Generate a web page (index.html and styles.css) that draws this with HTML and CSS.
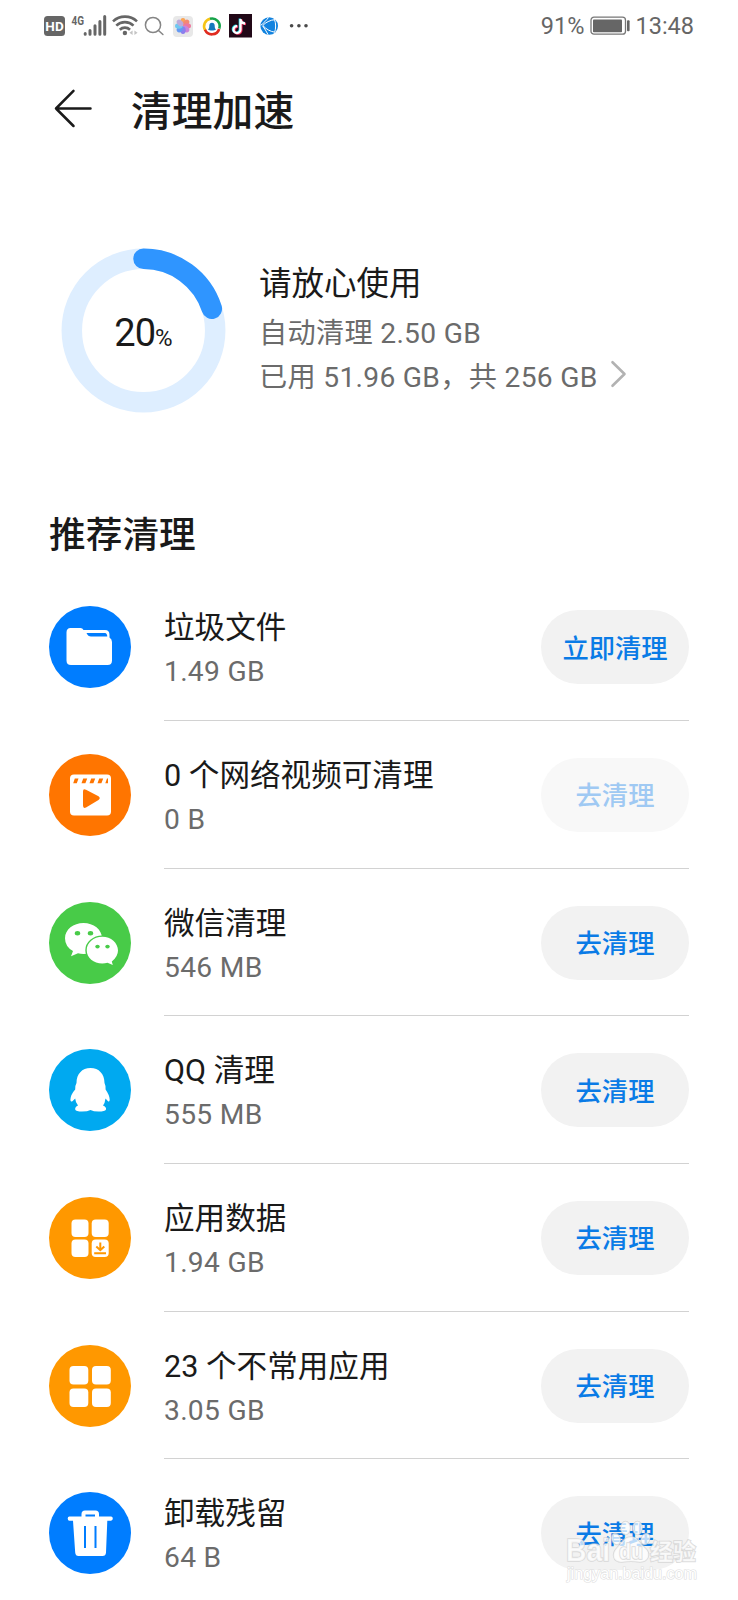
FILE: index.html
```html
<!DOCTYPE html>
<html lang="zh-CN">
<head>
<meta charset="utf-8">
<title>清理加速</title>
<link rel="stylesheet" href="styles.css">
</head>
<body>
<div class="screen">
  <div class="status">
    <svg class="status-icons" width="270" height="40" viewBox="40 6 270 40">
      <rect x="44" y="16" width="21" height="20" rx="3.5" fill="#666"/>
      <text x="54.5" y="30.600" class="hd" text-anchor="middle">HD</text>
      <text x="71.5" y="24.5" class="g4" textLength="12.5" lengthAdjust="spacingAndGlyphs">4G</text>
      <g stroke="#666" stroke-width="3" stroke-linecap="round">
        <path d="M85.2 33.4v.8M90 30.4v3.8M95 25.8v8.4M99.9 21.4v12.8M104.7 16.5v17.7"/>
      </g>
      <g fill="none" stroke="#666" stroke-width="2.6">
        <path d="M113 21.4a17.6 17.6 0 0 1 24 0M116.3 25.6a12.4 12.4 0 0 1 17.2 0M119.8 29.7a7.3 7.3 0 0 1 10.2 0"/>
      </g>
      <circle cx="124.9" cy="33" r="2.2" fill="#666"/>
      <path d="M132.6 30.5v4.6l-3.2-2.3zM134.4 30.5v4.6l3.2-2.3z" fill="#c4c4c4"/>
      <g fill="none" stroke="#858585" stroke-width="1.5" stroke-linecap="round">
        <circle cx="153" cy="25" r="7.6"/><path d="M158.5 30.5l4.4 4"/>
      </g>
      <rect x="173" y="16" width="20" height="21" rx="4" fill="#e8e8e8"/>
      <g opacity=".85">
        <ellipse cx="183" cy="21.8" rx="2.7" ry="3.8" fill="#ff9a3d"/>
        <ellipse cx="183" cy="21.8" rx="2.7" ry="3.8" fill="#f7785f" transform="rotate(45 183 26)"/>
        <ellipse cx="183" cy="21.8" rx="2.7" ry="3.8" fill="#ef6590" transform="rotate(90 183 26)"/>
        <ellipse cx="183" cy="21.8" rx="2.7" ry="3.8" fill="#c873d8" transform="rotate(135 183 26)"/>
        <ellipse cx="183" cy="21.8" rx="2.7" ry="3.8" fill="#7d6df0" transform="rotate(180 183 26)"/>
        <ellipse cx="183" cy="21.8" rx="2.7" ry="3.8" fill="#4f8cf5" transform="rotate(225 183 26)"/>
        <ellipse cx="183" cy="21.8" rx="2.7" ry="3.8" fill="#5cc3f2" transform="rotate(270 183 26)"/>
        <ellipse cx="183" cy="21.8" rx="2.7" ry="3.8" fill="#b7a0d8" transform="rotate(315 183 26)"/>
      </g>
      <g fill="none" stroke-width="2.6">
        <path d="M205.4 30.5A7.6 7.6 0 0 1 210.5 18.7" stroke="#f5c518"/>
        <path d="M210 18.8A7.6 7.6 0 0 1 219.3 28.5" stroke="#16a34a"/>
        <path d="M219.2 29A7.6 7.6 0 0 1 205 29.8" stroke="#e02b20"/>
      </g>
      <path d="M208 29.500c1.200-1.200 1.300-2.300 1.300-3.800 0-2 1-3 2.700-3s2.700 1 2.700 3c0 1.500.1 2.600 1.300 3.800-1 .8-2.300 1-4 1s-3-.2-4-1z" fill="#1478bd"/>
      <rect x="229" y="14" width="23" height="23.500" fill="#210817"/>
      <g fill="none" stroke-width="2.300">
        <path d="M240.500 19v10.500a3.500 3.500 0 1 1-3.300-3.400M240.500 19.500c.5 2.500 2 3.800 4.600 4" stroke="#20d5e5" transform="translate(-.7 -.5)"/>
        <path d="M240.500 19v10.500a3.500 3.500 0 1 1-3.300-3.400M240.500 19.500c.5 2.500 2 3.800 4.600 4" stroke="#f0295a" transform="translate(.9 .6)"/>
        <path d="M240.500 19v10.500a3.500 3.500 0 1 1-3.300-3.400M240.500 19.500c.5 2.500 2 3.800 4.600 4" stroke="#fff"/>
      </g>
      <circle cx="269.200" cy="26" r="8.800" fill="#1283df"/>
      <g fill="none" stroke="#fff" stroke-width="1">
        <path d="M275.500 19.500C270 20 265.500 22.500 262.800 25.500C266 29 270 31.500 274.800 32.200M274.500 19.500C276 23.500 276 28.500 274.600 32.500M268.500 17.500C266.500 20 263.500 23.500 260.700 25.300M262.600 25.800C264.500 28.500 266.500 31.500 268 34.500"/>
      </g>
      <g fill="#4a4a4a"><circle cx="291.600" cy="25.700" r="1.800"/><circle cx="298.900" cy="25.700" r="1.800"/><circle cx="306" cy="25.700" r="1.800"/></g>
    </svg>
    <div class="status-right">
      <span class="pct">91%</span>
      <svg class="battery" width="40" height="20" viewBox="0 0 40 20">
        <rect x="1" y="1.200" width="34.500" height="17" rx="3" fill="#fff" stroke="#777" stroke-width="1.300"/>
        <rect x="3" y="3.500" width="29" height="12.700" rx=".8" fill="#666"/>
        <rect x="37" y="4.300" width="2.600" height="11" rx="1" fill="#666"/>
      </svg>
      <span class="clock">13:48</span>
    </div>
  </div>

  <header class="header">
    <svg class="back" width="40" height="40" viewBox="0 0 40 40" fill="none" stroke="#1a1a1a" stroke-width="2.500" stroke-linecap="round" stroke-linejoin="round">
      <path d="M20.500 2.800L3 20.500L20.500 38M3 20.500H37.500"/>
    </svg>
    <h1 class="title">清理加速</h1>
  </header>

  <section class="summary">
    <div class="ring">
      <svg class="ring-svg" width="165" height="165" viewBox="-82.500 -82.500 165 165" fill="none" stroke-width="20.500">
        <circle r="71.700" stroke="#deeeff"/>
        <path d="M0 -71.700A71.700 71.700 0 0 1 68.300 -21.800" stroke="#2f95ff" stroke-linecap="round"/>
      </svg>
      <div class="ring-label">20<span class="ring-unit">%</span></div>
    </div>
    <div class="summary-text">
      <div class="summary-title">请放心使用</div>
      <div class="summary-line">自动清理 2.50 GB</div>
      <div class="summary-line">已用 51.96 GB，共 256 GB
        <svg class="chevron" width="18" height="28" viewBox="0 0 18 28" fill="none" stroke="#b2b2b2" stroke-width="2.600" stroke-linecap="round" stroke-linejoin="round"><path d="M2.500 2.200L14.500 14L2.500 25.800"/></svg>
      </div>
    </div>
  </section>

  <h2 class="section-title">推荐清理</h2>

  <div class="list">
    <div class="row">
      <svg class="icon" viewBox="0 0 82 82"><circle cx="41" cy="41" r="41" fill="#007dff"/>
        <path d="M21.500 22H31.500Q33.500 22 34.500 24H56Q60.500 24 60.500 29V31.500Q63 33 63 36V54.500Q63 59 58.500 59H22Q17.500 59 17.500 54.500V26.500Q17.500 22 21.500 22Z" fill="#fff"/>
        <path d="M37.500 27H56Q58 27 58.300 30.500H42Q39 30.500 37.500 27Z" fill="#007dff"/>
      </svg>
      <div class="body"><div class="text"><div class="name">垃圾文件</div><div class="size">1.49 GB</div></div><button class="btn">立即清理</button></div>
    </div>
    <div class="row">
      <svg class="icon" viewBox="0 0 82 82"><circle cx="41" cy="41" r="41" fill="#ff7500"/>
        <rect x="21" y="20.500" width="41" height="41" rx="4" fill="#fff"/>
        <g fill="#ff7500"><path d="M25.800 24.500H29.500L27.800 29.300H24.200ZM34.200 24.500H38.200L36.400 29.300H32.500ZM42.200 24.500H46.200L44.400 29.300H40.500ZM50.200 24.500H54.200L52.400 29.300H48.500ZM58 24.500H59V29.300H56.300Z"/><path d="M34 37.500Q34 34 37 35.700L49.500 42.200Q52 44 49.500 46L37 53.500Q34 55 34 51.500Z"/></g>
      </svg>
      <div class="body"><div class="text"><div class="name">0 个网络视频可清理</div><div class="size">0 B</div></div><button class="btn btn-off" disabled>去清理</button></div>
    </div>
    <div class="row">
      <svg class="icon" viewBox="0 0 82 82"><circle cx="41" cy="41" r="41" fill="#48cb48"/>
        <path d="M34.500 21C44.500 21 53 27.500 53 36.200S44.500 52 34.500 52Q31.500 52 29 51.300L22 54.300L24 49Q16 44.500 16 36.200C16 27.500 24.500 21 34.500 21Z" fill="#fff"/>
        <path d="M53.300 34.800C62 34.800 69 41 69 48.500Q69 54.500 62.800 59.500L63.800 63L58.500 60.800Q56 61.600 53.300 61.600C44.600 61.600 37.700 55.500 37.700 48.200S44.600 34.800 53.300 34.800Z" fill="#fff" stroke="#48cb48" stroke-width="2.800" paint-order="stroke"/>
        <g fill="#48cb48"><ellipse cx="28.500" cy="31.200" rx="2.700" ry="2.200"/><ellipse cx="41.500" cy="31.200" rx="2.700" ry="2.200"/><ellipse cx="48.500" cy="44.600" rx="2.200" ry="1.900"/><ellipse cx="58.500" cy="44.600" rx="2.200" ry="1.900"/></g>
      </svg>
      <div class="body"><div class="text"><div class="name">微信清理</div><div class="size">546 MB</div></div><button class="btn">去清理</button></div>
    </div>
    <div class="row">
      <svg class="icon" viewBox="0 0 82 82"><circle cx="41" cy="41" r="41" fill="#00a9f0"/>
        <path d="M41.500 19C50 19 55.500 25 55.500 34Q57 37 56.600 40.500Q60.700 46.500 60.700 50.500Q60.700 53.500 58.800 52L56.500 49.500Q56 54 54 56.500Q57.500 58 57 60.500Q56 62.500 49.500 62.500Q44.500 62.500 41.500 61Q38.500 62.500 33 62.500Q27 62.500 26.200 60.500Q25.800 58 29 56.500Q26.500 53.500 26.200 49.500L23.700 52Q21.300 53.500 21.400 50.500Q21.700 45.500 26.200 40.500Q25.800 37 27.500 34C27.500 25 33 19 41.500 19Z" fill="#fff"/>
      </svg>
      <div class="body"><div class="text"><div class="name">QQ 清理</div><div class="size">555 MB</div></div><button class="btn">去清理</button></div>
    </div>
    <div class="row">
      <svg class="icon" viewBox="0 0 82 82"><circle cx="41" cy="41" r="41" fill="#ff9800"/>
        <g fill="#fff"><rect x="22.500" y="22.500" width="17" height="17.500" rx="4"/><rect x="42.700" y="22.500" width="17" height="17.500" rx="4"/><rect x="22.500" y="42.500" width="17" height="17.500" rx="4"/><rect x="42.700" y="42.500" width="17" height="17.500" rx="4"/></g>
        <path d="M51.300 45.500V52M47.300 49.500L51.300 53.200L55.300 49.500M45.200 56.200H57" fill="none" stroke="#ff9800" stroke-width="2"/>
      </svg>
      <div class="body"><div class="text"><div class="name">应用数据</div><div class="size">1.94 GB</div></div><button class="btn">去清理</button></div>
    </div>
    <div class="row">
      <svg class="icon" viewBox="0 0 82 82"><circle cx="41" cy="41" r="41" fill="#ff9800"/>
        <g fill="#fff"><rect x="20.500" y="21" width="18.800" height="18.500" rx="4"/><rect x="43" y="21" width="18.800" height="18.500" rx="4"/><rect x="20.500" y="43.500" width="18.800" height="18.500" rx="4"/><rect x="43" y="43.500" width="18.800" height="18.500" rx="4"/></g>
      </svg>
      <div class="body"><div class="text"><div class="name">23 个不常用应用</div><div class="size">3.05 GB</div></div><button class="btn">去清理</button></div>
    </div>
    <div class="row">
      <svg class="icon" viewBox="0 0 82 82"><circle cx="41" cy="41" r="41" fill="#007dff"/>
        <path d="M20.500 24.500H32.500V22Q32.500 18.500 36 18.500H46.500Q50 18.500 50 22V24.500H62Q63.800 24.500 63.800 26.500T62 28.800H58.300L57 60.500Q56.800 64 53.500 64H29.500Q26.500 64 26.200 60.500L24 28.800H20.500Q18.700 28.800 18.700 26.600T20.500 24.500Z" fill="#fff"/>
        <path d="M36.500 22.500H46V24.500H36.500ZM35 34H37V56H35ZM45.500 34H47.500V56H45.500Z" fill="#007dff"/>
      </svg>
      <div class="body"><div class="text"><div class="name">卸载残留</div><div class="size">64 B</div></div><button class="btn">去清理</button></div>
    </div>
  </div>

  <svg class="watermark" width="148" height="70" viewBox="560 1515 148 70">
    <g fill="#fff" fill-opacity=".72" stroke="#cfcfcf" stroke-opacity=".75" stroke-width="1.600" paint-order="stroke">
      <ellipse cx="616" cy="1539" rx="4" ry="5.500" transform="rotate(-20 616 1539)"/>
      <ellipse cx="625.500" cy="1528" rx="4.500" ry="6.500"/>
      <ellipse cx="637.500" cy="1528" rx="4.500" ry="6.500"/>
      <ellipse cx="645.500" cy="1539" rx="4" ry="5.500" transform="rotate(20 645.500 1539)"/>
      <path d="M631 1537C638 1537 639 1543 645 1548S649 1562 640 1562Q631 1560.500 622 1562C612 1562 612 1553 617 1548S624 1537 631 1537Z"/>
      <text class="wm-latin" x="566" y="1561" textLength="44" lengthAdjust="spacingAndGlyphs">Bai</text>
      <text class="wm-du" x="619" y="1559" textLength="24" lengthAdjust="spacingAndGlyphs">du</text>
      <text class="wm-cjk" x="650" y="1560" textLength="46" lengthAdjust="spacingAndGlyphs">经验</text>
    </g>
    <text class="wm-url" x="567" y="1579" textLength="130" lengthAdjust="spacingAndGlyphs">jingyan.baidu.com</text>
  </svg>
</div>
</body>
</html>
```
FILE: styles.css
```css
* { box-sizing: border-box; }

body {
  margin: 0;
  background: #fff;
  color: #1a1a1a;
  font-family: Roboto, "Noto Sans CJK SC", sans-serif;
}

.screen {
  position: relative;
  width: 738px;
  height: 1600px;
  overflow: hidden;
}

.status {
  display: flex;
  justify-content: space-between;
  height: 52px;
  padding: 6px 44px 0 40px;
}

.status-icons { display: block; }
.hd { font: 700 13.5px Roboto, sans-serif; fill: #fff; }
.g4 { font: 700 13px Roboto, sans-serif; fill: #666; }

.status-right {
  display: flex;
  align-items: center;
  height: 40px;
  color: #666;
  font-size: 23.5px;
}

.battery { margin: 0 5px 0 6px; }

.header {
  display: flex;
  align-items: center;
  height: 117px;
  padding-left: 53px;
}

.back { margin-top: -5px; }

.title {
  margin: 3px 0 0 38px;
  font-size: 40.8px;
  font-weight: 500;
  line-height: 60px;
}

.summary {
  display: flex;
  padding: 79px 0 0 61px;
  height: 319px;
}

.ring {
  display: grid;
  place-items: center;
  width: 165px;
  height: 165px;
}

.ring-svg,
.ring-label { grid-area: 1 / 1; }

.ring-label {
  padding-top: 4px;
  font-size: 38px;
  letter-spacing: -1px;
}

.ring-unit { font-size: 24px; letter-spacing: 0; }

.summary-text { padding: 11px 0 0 33px; }

.summary-title {
  font-size: 32.5px;
  line-height: 50px;
  height: 50px;
}

.summary-line {
  display: flex;
  align-items: center;
  height: 43.5px;
  color: #6b6b6b;
  font-size: 28.2px;
  letter-spacing: .3px;
  white-space: nowrap;
}

.chevron { margin-left: 12px; }

.section-title {
  margin: 0;
  height: 85.5px;
  padding: 18px 0 0 49px;
  font-size: 36.7px;
  font-weight: 500;
  line-height: 60px;
}

.list { padding: 0 49px; }

.row {
  display: flex;
  align-items: center;
  gap: 33px;
  height: 147.67px;
}

.icon {
  flex: none;
  width: 82px;
  height: 82px;
}

.body {
  display: flex;
  flex: 1;
  align-items: center;
  justify-content: space-between;
  height: 100%;
  border-bottom: 1px solid #d2d2d2;
}

.row:last-child .body { border-bottom-color: transparent; }

.text { padding-top: 6px; }
.name { font-size: 30.6px; line-height: 44px; white-space: nowrap; }
.size { font-size: 28.2px; letter-spacing: .3px; line-height: 43px; color: #6b6b6b; }

.btn {
  width: 148px;
  height: 74px;
  margin-top: 1px;
  padding: 3px 0 0;
  border: 0;
  border-radius: 37px;
  background: #f2f2f2;
  color: #0a7be6;
  font: 500 26.3px/40px Roboto, "Noto Sans CJK SC", sans-serif;
}

.btn-off { background: #f8f8f8; color: #9fc9f3; }

.watermark {
  position: absolute;
  left: 560px;
  top: 1515px;
}

.wm-latin { font: 700 31px "Liberation Sans", sans-serif; }
.wm-du { font: 700 22px "Liberation Sans", sans-serif; }
.wm-cjk { font: 700 23px "Noto Sans CJK SC", sans-serif; }
.wm-url {
  font: 400 16px "Liberation Sans", sans-serif;
  fill: #fff;
  stroke: #dedede;
  stroke-width: 1.2px;
  paint-order: stroke;
}
```
